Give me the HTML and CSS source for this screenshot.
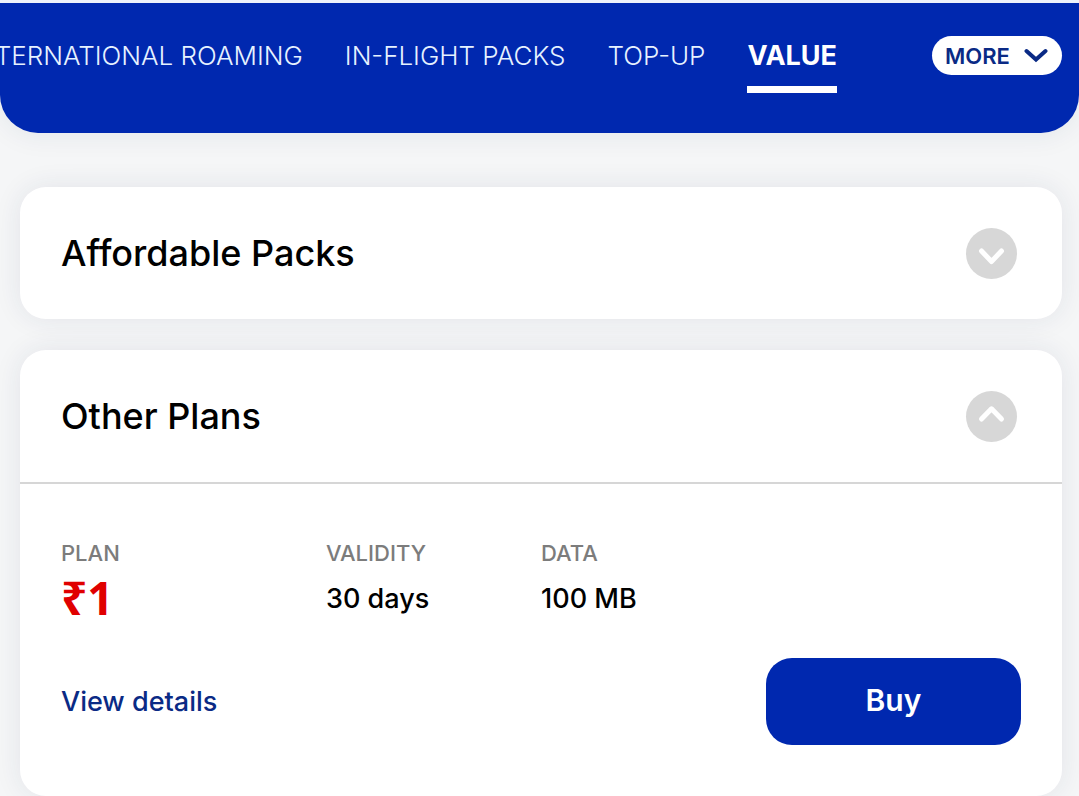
FILE: index.html
```html
<!DOCTYPE html>
<html lang="en">
<head>
<meta charset="utf-8">
<meta name="viewport" content="width=device-width, initial-scale=1">
<title>Value packs</title>
<link rel="stylesheet" href="styles.css">
</head>
<body>
<header class="topbar">
  <nav class="tabs" aria-label="Pack categories">
    <a class="tab" href="#roaming">INTERNATIONAL ROAMING</a>
    <a class="tab" href="#in-flight">IN-FLIGHT PACKS</a>
    <a class="tab" href="#top-up">TOP-UP</a>
    <a class="tab tab-active" href="#value" aria-current="page">VALUE</a>
  </nav>
  <button class="more" type="button">MORE
    <svg class="more-icon" viewBox="0 0 24 16" aria-hidden="true"><path d="M2.5 3 L12 11.500 L21.5 3"/></svg>
  </button>
</header>
<main class="packs">
  <section class="card">
    <div class="card-head">
      <h2 class="card-title">Affordable Packs</h2>
      <button class="toggle" type="button" aria-label="Expand Affordable Packs" aria-expanded="false">
        <svg class="toggle-icon" viewBox="0 0 51 51" aria-hidden="true"><path d="M15.500 23 L25.500 33.500 L35.500 23"/></svg>
      </button>
    </div>
  </section>
  <section class="card">
    <div class="card-head card-head-open">
      <h2 class="card-title">Other Plans</h2>
      <button class="toggle" type="button" aria-label="Collapse Other Plans" aria-expanded="true">
        <svg class="toggle-icon" viewBox="0 0 51 51" aria-hidden="true"><path d="M15.500 28 L25.500 17.800 L35.500 28"/></svg>
      </button>
    </div>
    <div class="card-body">
      <dl class="facts">
        <div class="fact"><dt class="label">PLAN</dt><dd class="value price">₹1</dd></div>
        <div class="fact"><dt class="label">VALIDITY</dt><dd class="value">30 days</dd></div>
        <div class="fact"><dt class="label">DATA</dt><dd class="value">100 MB</dd></div>
      </dl>
      <div class="actions">
        <a class="details" href="#details">View details</a>
        <button class="buy" type="button">Buy</button>
      </div>
    </div>
  </section>
</main>
</body>
</html>
```
FILE: styles.css
```css
* { box-sizing: border-box; }
body {
  margin: 0;
  background: #f5f6f7;
  color: #000;
  font-family: Inter, "Liberation Sans", sans-serif;
  overflow-x: hidden;
}
button { border: 0; font-family: inherit; cursor: pointer; }
.topbar {
  display: flex;
  align-items: flex-start;
  gap: 95px;
  height: 133px;
  padding: 33px 17px 0 0;
  border-top: 3px solid #eef2fb;
  border-radius: 0 0 38px 38px;
  background: #0028af;
  box-shadow: 0 2px 28px rgba(30, 45, 90, 0.08);
}
.tabs {
  display: flex;
  flex: 1;
  justify-content: flex-end;
  gap: 42px;
  min-width: 0;
  overflow: hidden;
}
.tab {
  flex: none;
  height: 57px;
  color: #e6f2ff;
  font-size: 26px;
  font-weight: 300;
  line-height: 40px;
  text-decoration: none;
}
.tab-active {
  border-bottom: 7px solid #fff;
  color: #fff;
  font-size: 27px;
  font-weight: 700;
}
.more {
  display: flex;
  flex: none;
  align-items: center;
  justify-content: space-between;
  width: 130px;
  height: 39px;
  padding: 0 14px 0 13px;
  border-radius: 20px;
  background: #fff;
  color: #0a2a85;
  font-size: 22px;
  font-weight: 600;
}
.more-icon { width: 24px; height: 16px; }
.more-icon path {
  fill: none;
  stroke: #0a2a85;
  stroke-width: 4;
  stroke-linecap: round;
}
.packs {
  display: grid;
  gap: 31px;
  padding: 54px 17px 0 20px;
}
.card {
  border-radius: 26px;
  background: #fff;
  box-shadow: 0 0 28px rgba(30, 45, 90, 0.09);
}
.card-head {
  display: flex;
  align-items: center;
  justify-content: space-between;
  height: 132px;
  padding: 0 45px 0 41px;
}
.card-head-open {
  height: 134px;
  border-bottom: 2px solid #d6d6d6;
}
.card-title {
  margin: 0;
  font-size: 36px;
  font-weight: 500;
  line-height: 44px;
}
.toggle {
  width: 51px;
  height: 51px;
  padding: 0;
  border-radius: 50%;
  background: #d7d7d7;
}
.toggle-icon { display: block; }
.toggle-icon path {
  fill: none;
  stroke: #fff;
  stroke-width: 5;
  stroke-linecap: round;
  stroke-linejoin: round;
}
.card-body { padding: 55px 41px 51px; }
.facts {
  display: grid;
  grid-template-columns: 265px 215px 1fr;
  margin: 0;
}
.label {
  color: #7c7c7c;
  font-size: 22px;
  font-weight: 500;
  line-height: 28px;
}
.value {
  margin: 0;
  font-size: 27px;
  font-weight: 500;
  line-height: 64px;
}
.price {
  color: #e00000;
  font-family: "Noto Sans", sans-serif;
  font-size: 46px;
  font-weight: 700;
  line-height: 60px;
}
.actions {
  display: flex;
  align-items: center;
  justify-content: space-between;
  margin-top: 27px;
}
.details {
  color: #0a2a85;
  font-size: 27px;
  font-weight: 500;
  text-decoration: none;
}
.buy {
  width: 255px;
  height: 87px;
  padding: 0 0 4px;
  border-radius: 26px;
  background: #0028af;
  color: #fff;
  font-size: 30px;
  font-weight: 600;
}
```
